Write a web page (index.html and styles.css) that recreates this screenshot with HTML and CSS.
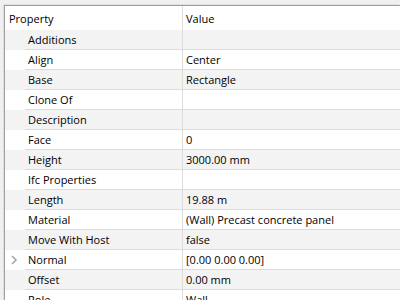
FILE: index.html
```html
<!DOCTYPE html>
<html>
<head>
<meta charset="utf-8">
<link rel="stylesheet" href="styles.css">
</head>
<body>
<div class="panel">
  <div class="grid">
    <div class="row header">
      <div class="hname">Property</div>
      <div class="val">Value</div>
    </div>
    <div class="row alt"><div class="ind"></div><div class="name">Additions</div><div class="val"></div></div>
    <div class="row"><div class="ind"></div><div class="name">Align</div><div class="val">Center</div></div>
    <div class="row alt"><div class="ind"></div><div class="name">Base</div><div class="val">Rectangle</div></div>
    <div class="row"><div class="ind"></div><div class="name">Clone Of</div><div class="val"></div></div>
    <div class="row alt"><div class="ind"></div><div class="name">Description</div><div class="val"></div></div>
    <div class="row"><div class="ind"></div><div class="name">Face</div><div class="val">0</div></div>
    <div class="row alt"><div class="ind"></div><div class="name">Height</div><div class="val">3000.00 mm</div></div>
    <div class="row"><div class="ind"></div><div class="name">Ifc Properties</div><div class="val"></div></div>
    <div class="row alt"><div class="ind"></div><div class="name">Length</div><div class="val">19.88 m</div></div>
    <div class="row"><div class="ind"></div><div class="name">Material</div><div class="val">(Wall) Precast concrete panel</div></div>
    <div class="row alt"><div class="ind"></div><div class="name">Move With Host</div><div class="val">false</div></div>
    <div class="row"><div class="ind"><svg class="chev" width="8" height="10" viewBox="0 0 8 10"><path d="M2 1 L6 5 L2 9" fill="none" stroke="#a6a6a6" stroke-width="1.6"/></svg></div><div class="name">Normal</div><div class="val">[0.00 0.00 0.00]</div></div>
    <div class="row alt"><div class="ind"></div><div class="name">Offset</div><div class="val">0.00 mm</div></div>
    <div class="row"><div class="ind"></div><div class="name">Role</div><div class="val">Wall</div></div>
  </div>
</div>
</body>
</html>
```
FILE: styles.css
```css
html, body {
  margin: 0;
  padding: 0;
  width: 400px;
  height: 300px;
  overflow: hidden;
  background: #f0f0f0;
}
.panel {
  padding: 5px 0 0 4px;
  background: #f0f0f0;
}
.grid {
  background: #ffffff;
  border-top: 1px solid #a0a0a0;
  border-left: 1px solid #a0a0a0;
  box-shadow: -1px -1px 0 0 #dedede;
  font-family: "Open Sans", "Noto Sans", sans-serif;
  font-size: 11px;
  color: #000;
}
.row {
  display: grid;
  grid-template-columns: 20px 158px 1fr;
  height: 20px;
  background: #ffffff;
}
.row.alt {
  background: #f3f3f3;
}
.row.header {
  grid-template-columns: 178px 1fr;
  height: 24px;
  background: #ffffff;
}
.hname {
  padding-left: 4px;
  display: flex;
  align-items: center;
  border-right: 1px solid #dcdcdc;
}
.header .val {
  border-bottom: none;
}
.ind {
  display: flex;
  align-items: center;
  justify-content: center;
}
.chev {
  display: block;
  margin-left: -2px;
}
.name {
  padding-left: 3px;
  display: flex;
  align-items: center;
  border-right: 1px solid #dcdcdc;
  border-bottom: 1px solid #dcdcdc;
  white-space: nowrap;
}
.val {
  padding-left: 3px;
  display: flex;
  align-items: center;
  border-bottom: 1px solid #dcdcdc;
  white-space: nowrap;
}
```
